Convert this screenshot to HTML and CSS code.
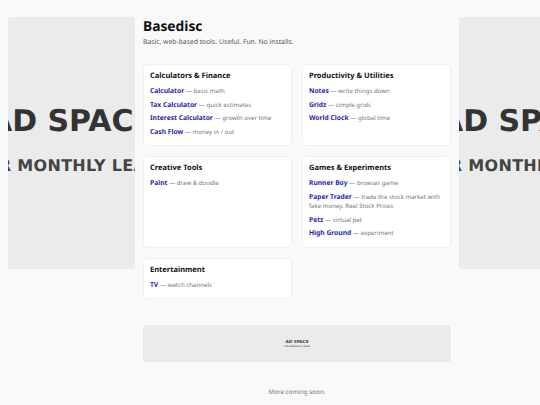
FILE: index.html
```html
<!DOCTYPE html>
<html lang="en">
<head>
<meta charset="utf-8">
<title>Basedisc</title>
<link rel="stylesheet" href="styles.css">
</head>
<body>
<div class="page">
  <aside class="side-ad">
    <div class="side-ad-title">AD SPACE</div>
    <div class="side-ad-sub">FOR MONTHLY LEASE</div>
  </aside>
  <main class="main">
    <header class="header">
      <h1 class="title">Basedisc</h1>
      <p class="tagline">Basic, web-based tools. Useful. Fun. No installs.</p>
    </header>
    <section class="grid">
      <div class="card">
        <h2 class="card-title">Calculators &amp; Finance</h2>
        <ul class="items">
          <li><a class="link" href="#">Calculator</a> <span class="desc">— basic math</span></li>
          <li><a class="link" href="#">Tax Calculator</a> <span class="desc">— quick estimates</span></li>
          <li><a class="link" href="#">Interest Calculator</a> <span class="desc">— growth over time</span></li>
          <li><a class="link" href="#">Cash Flow</a> <span class="desc">— money in / out</span></li>
        </ul>
      </div>
      <div class="card">
        <h2 class="card-title">Productivity &amp; Utilities</h2>
        <ul class="items">
          <li><a class="link" href="#">Notes</a> <span class="desc">— write things down</span></li>
          <li><a class="link" href="#">Gridz</a> <span class="desc">— simple grids</span></li>
          <li><a class="link" href="#">World Clock</a> <span class="desc">— global time</span></li>
        </ul>
      </div>
      <div class="card">
        <h2 class="card-title">Creative Tools</h2>
        <ul class="items">
          <li><a class="link" href="#">Paint</a> <span class="desc">— draw &amp; doodle</span></li>
        </ul>
      </div>
      <div class="card">
        <h2 class="card-title">Games &amp; Experiments</h2>
        <ul class="items">
          <li><a class="link" href="#">Runner Boy</a> <span class="desc">— browser game</span></li>
          <li><a class="link" href="#">Paper Trader</a> <span class="desc">— trade the stock market with fake money. Real Stock Prices</span></li>
          <li><a class="link" href="#">Petz</a> <span class="desc">— virtual pet</span></li>
          <li><a class="link" href="#">High Ground</a> <span class="desc">— experiment</span></li>
        </ul>
      </div>
      <div class="card">
        <h2 class="card-title">Entertainment</h2>
        <ul class="items">
          <li><a class="link" href="#">TV</a> <span class="desc">— watch channels</span></li>
        </ul>
      </div>
    </section>
    <div class="banner-ad">
      <div class="banner-title">AD SPACE</div>
      <div class="banner-sub">FOR MONTHLY LEASE</div>
    </div>
    <footer class="footer">More coming soon.</footer>
  </main>
  <aside class="side-ad">
    <div class="side-ad-title">AD SPACE</div>
    <div class="side-ad-sub">FOR MONTHLY LEASE</div>
  </aside>
</div>
</body>
</html>
```

FILE: styles.css
```css
html, body {
  margin: 0;
  padding: 0;
  background: #f9f9f9;
  font-family: "Noto Sans", "Open Sans", sans-serif;
  color: #111;
  text-rendering: geometricPrecision;
}

.page {
  display: flex;
  align-items: flex-start;
  gap: 8px;
  padding: 17px 0 0 8px;
  width: 540px;
  height: 405px;
  box-sizing: border-box;
  overflow: hidden;
}

.side-ad {
  flex: 0 0 127px;
  height: 252px;
  background: #ebebeb;
  border-radius: 3px;
  overflow: hidden;
  display: flex;
  flex-direction: column;
  align-items: center;
  justify-content: center;
  padding-bottom: 4px;
  box-sizing: border-box;
  white-space: nowrap;
  font-family: "DejaVu Sans", sans-serif;
  font-weight: bold;
}

.side-ad-title {
  font-size: 30px;
  line-height: 30px;
  color: #333;
}

.side-ad-sub {
  font-size: 16px;
  line-height: 18px;
  margin-top: 19.5px;
  color: #444;
  letter-spacing: 0.3px;
}

.main {
  flex: 0 0 308px;
  display: flex;
  flex-direction: column;
}

.title {
  margin: 0;
  font-size: 13.8px;
  line-height: 20px;
  font-weight: 700;
  color: #111;
}

.tagline {
  margin: 0;
  font-size: 6.8px;
  line-height: 10px;
  color: #555;
}

.grid {
  margin-top: 17px;
  display: grid;
  grid-template-columns: 1fr 1fr;
  gap: 10px;
}

.card {
  background: #fff;
  border: 1px solid #efefef;
  border-radius: 5px;
  padding: 6px 6px 9px;
}

.card-title {
  margin: 0 0 5px;
  font-size: 7.5px;
  line-height: 10px;
  font-weight: 700;
  color: #111;
}

.items {
  list-style: none;
  margin: 0;
  padding: 0;
  display: flex;
  flex-direction: column;
  gap: 4px;
}

.items li {
  font-size: 6.7px;
  line-height: 9.5px;
}

.link {
  color: #2727b0;
  font-weight: 700;
  text-decoration: none;
  line-height: 1;
}

.desc {
  color: #777;
  font-size: 6.1px;
  line-height: 1;
}

.banner-ad {
  margin-top: 26px;
  height: 37px;
  background: #ebebeb;
  border-radius: 3px;
  display: flex;
  flex-direction: column;
  align-items: center;
  justify-content: center;
  font-family: "DejaVu Sans", sans-serif;
  font-weight: bold;
  color: #444;
}

.banner-title {
  font-size: 4.2px;
  line-height: 6px;
}

.banner-sub {
  font-size: 2.2px;
  line-height: 4px;
  color: #666;
}

.footer {
  margin-top: 25px;
  text-align: center;
  font-size: 6.3px;
  line-height: 10px;
  color: #777;
}
```
